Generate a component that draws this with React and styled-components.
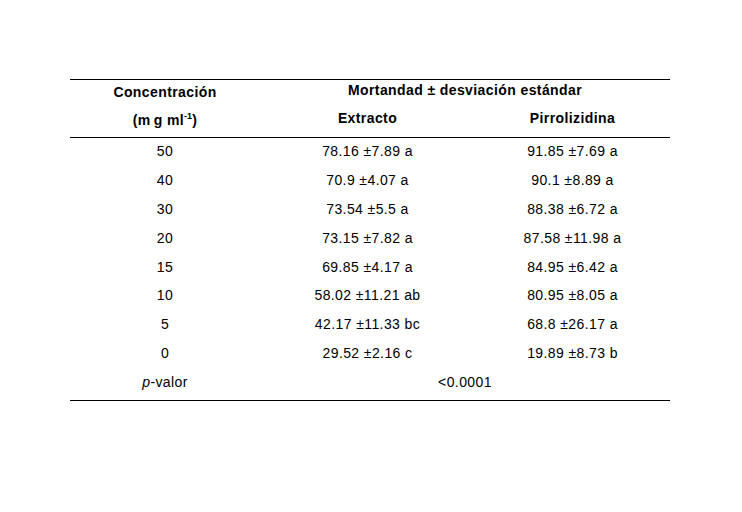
import styled, { createGlobalStyle } from "styled-components";

const GlobalStyle = createGlobalStyle`
  html, body {
    margin: 0;
    padding: 0;
    background: #fff;
  }
  body {
    font-family: "Liberation Sans", Arial, sans-serif;
    color: #000;
  }
`;

const Page = styled.div`
  width: 742px;
  height: 512px;
  padding: 79px 0 0 70px;
  box-sizing: border-box;
`;

const Table = styled.div`
  width: 600px;
  border-bottom: 1px solid #000;
`;

const Header = styled.div`
  display: grid;
  grid-template-columns: 190px 215px 195px;
  grid-template-rows: 24px 33px;
  border-top: 1px solid #000;
  border-bottom: 1px solid #000;
`;

const HeadCell = styled.div`
  grid-column: ${(p) => p.$col || "auto"};
  font-size: 14px;
  font-weight: bold;
  letter-spacing: 0.4px;
  text-align: center;
  line-height: ${(p) => p.$lh}px;
  white-space: nowrap;
`;

const Sup = styled.sup`
  font-size: 9px;
  vertical-align: 6px;
  line-height: 0;
  letter-spacing: 0;
`;

const Gap = styled.span`
  margin-right: 3px;
`;

const Body = styled.div`
  padding-bottom: 2px;
`;

const Row = styled.div`
  display: grid;
  grid-template-columns: 190px 215px 195px;
  height: 28.875px;
`;

const Cell = styled.div`
  grid-column: ${(p) => p.$span || "auto"};
  font-size: 14px;
  letter-spacing: 0.4px;
  line-height: 26px;
  text-align: center;
  white-space: nowrap;
`;

const Italic = styled.i`
  font-style: italic;
`;

const rows = [
  ["50", "78.16 ±7.89 a", "91.85 ±7.69 a"],
  ["40", "70.9 ±4.07 a", "90.1 ±8.89 a"],
  ["30", "73.54 ±5.5 a", "88.38 ±6.72 a"],
  ["20", "73.15 ±7.82 a", "87.58 ±11.98 a"],
  ["15", "69.85 ±4.17 a", "84.95 ±6.42 a"],
  ["10", "58.02 ±11.21 ab", "80.95 ±8.05 a"],
  ["5", "42.17 ±11.33 bc", "68.8 ±26.17 a"],
  ["0", "29.52 ±2.16 c", "19.89 ±8.73 b"],
];

export default function App() {
  return (
    <>
      <GlobalStyle />
      <Page>
        <Table>
          <Header>
            <HeadCell $lh={24}>Concentración</HeadCell>
            <HeadCell $col="2 / 4" $lh={20}>
              Mortandad ± desviación estándar
            </HeadCell>
            <HeadCell $lh={32}>
              (<Gap>m</Gap>g ml<Sup>-1</Sup>)
            </HeadCell>
            <HeadCell $lh={28}>Extracto</HeadCell>
            <HeadCell $lh={28}>Pirrolizidina</HeadCell>
          </Header>
          <Body>
            {rows.map((r) => (
              <Row key={r[0]}>
                <Cell>{r[0]}</Cell>
                <Cell>{r[1]}</Cell>
                <Cell>{r[2]}</Cell>
              </Row>
            ))}
            <Row>
              <Cell>
                <Italic>p</Italic>-valor
              </Cell>
              <Cell $span="2 / 4">&lt;0.0001</Cell>
            </Row>
          </Body>
        </Table>
      </Page>
    </>
  );
}
